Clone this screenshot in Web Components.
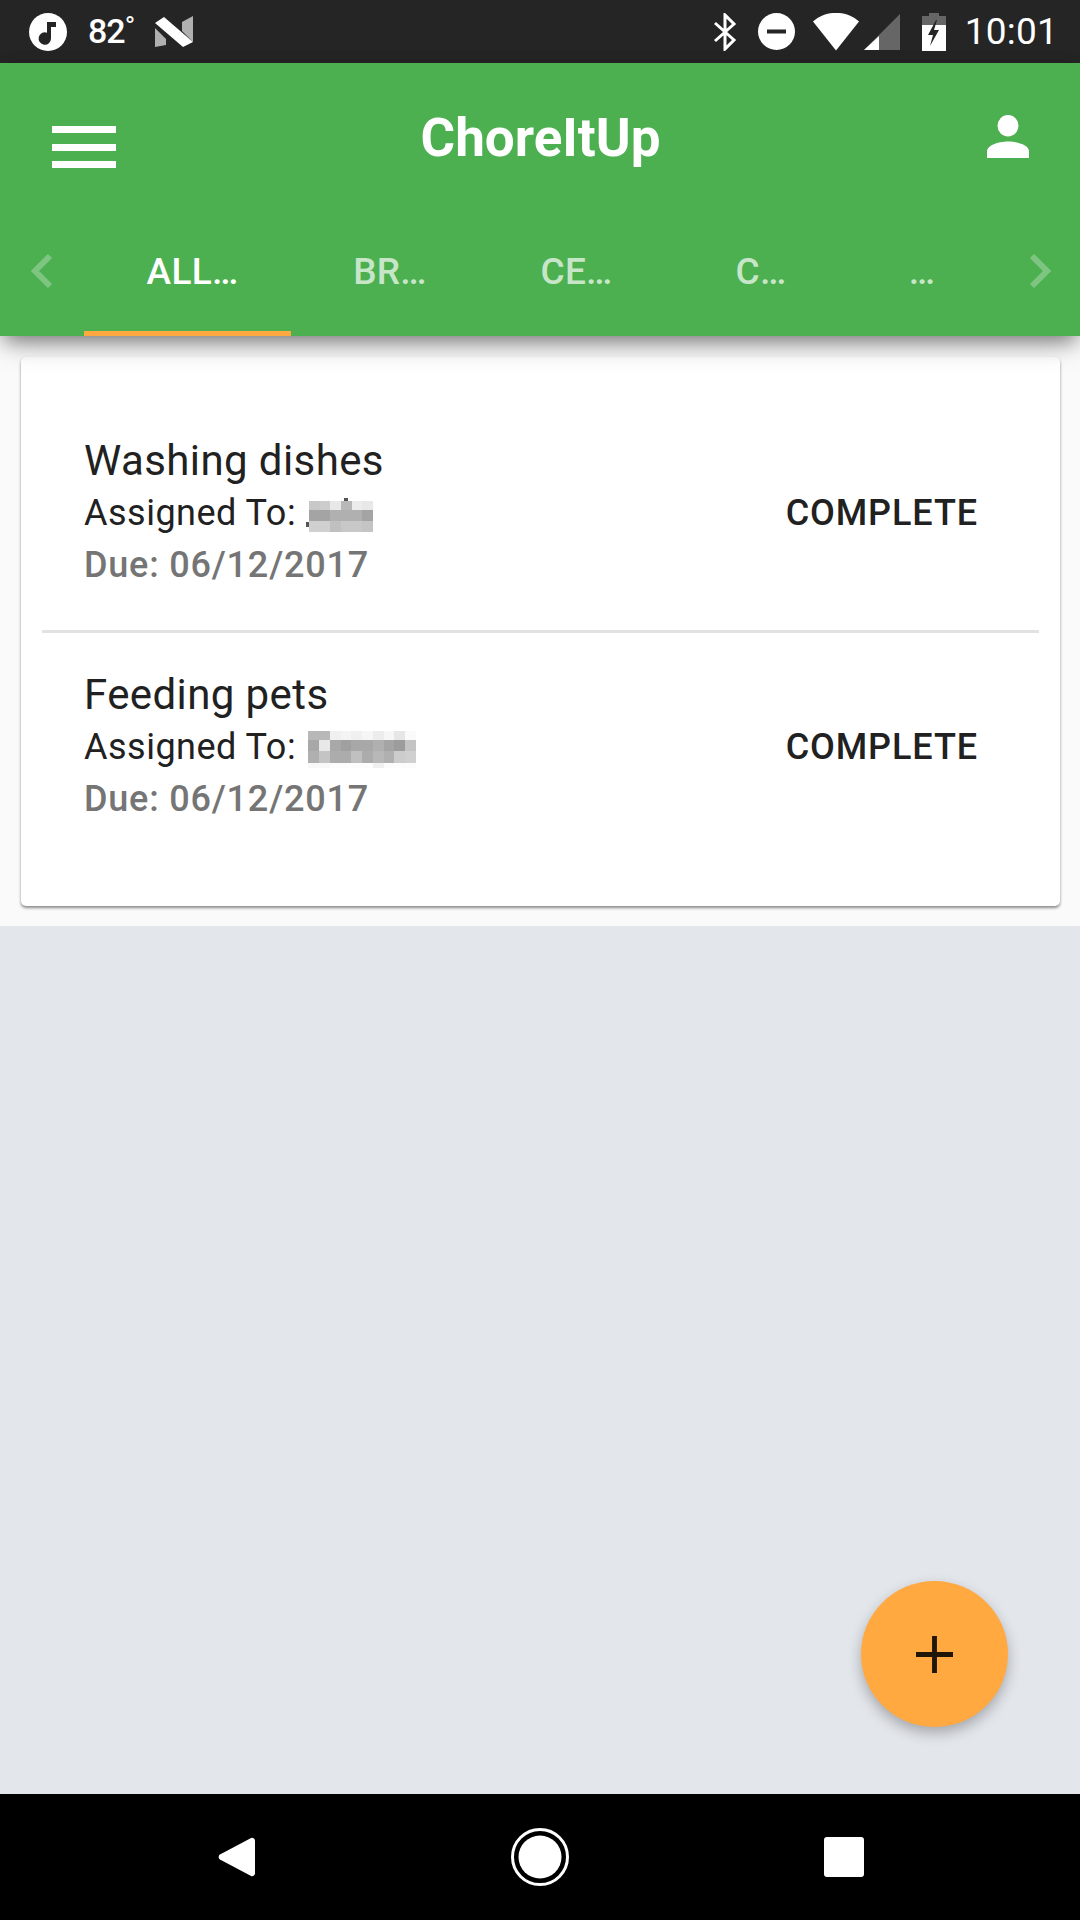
<!DOCTYPE html>
<html>
<head>
<meta charset="utf-8">
<title>ChoreItUp</title>
<style>
  html, body { margin: 0; padding: 0; }
  body { width: 1080px; height: 1920px; overflow: hidden; font-family: Roboto, "Liberation Sans", sans-serif; }
</style>
</head>
<body>
<app-shell>
  <status-bar></status-bar>
  <app-header title="ChoreItUp"></app-header>
  <chore-list>
    <chore-item name="Washing dishes" due="06/12/2017" cells="1"></chore-item>
    <chore-item name="Feeding pets" due="06/12/2017" cells="2"></chore-item>
  </chore-list>
  <add-button></add-button>
  <nav-bar></nav-bar>
</app-shell>

<script>
/* page frame */
class AppShell extends HTMLElement {
  constructor() {
    super();
    this.attachShadow({ mode: 'open' });
    this.shadowRoot.innerHTML = `
      <style>
        :host { display: flex; flex-direction: column; position: relative; width: 1080px; height: 1920px; background: #e3e6eb; }
      </style>
      <slot></slot>`;
  }
}

/* top android bar */
class StatusBar extends HTMLElement {
  constructor() {
    super();
    this.attachShadow({ mode: 'open' });
    this.shadowRoot.innerHTML = `
      <style>
        :host { display: flex; align-items: center; height: 63px; background: #252525; color: #fff; padding: 0 22px 0 29px; box-sizing: border-box; font-family: Roboto, sans-serif; flex: none; }
        svg { display: block; flex: none; }
        .temp { display: flex; font-size: 34px; font-weight: 500; margin-left: 21px; letter-spacing: -1px; line-height: 63px; }
        .temp small { font-size: 28px; font-weight: 400; line-height: 54px; letter-spacing: 0; }
        .n { margin-left: 20px; }
        .gap { flex: 1; }
        .time { font-size: 37px; margin-left: 19px; line-height: 63px; letter-spacing: .2px; }
      </style>
      <svg width="38" height="38" viewBox="0 0 38 38"><circle cx="19" cy="19" r="19" fill="#fff"/><path d="M18 9h9v5h-5v11.500a6.200 6.200 0 1 1-4-5.800z" fill="#252525"/></svg>
      <span class="temp">82<small>°</small></span>
      <svg class="n" width="38" height="31" viewBox="0 0 38 31"><path d="M0 12 11 23v6L0 31z" fill="#b0b0b0"/><path d="M27 6 38 0v26L27 15z" fill="#b0b0b0"/><path d="M0 7 9 1 38 26l-10 5z" fill="#fff"/></svg>
      <span class="gap"></span>
      <svg width="24" height="38" viewBox="0 0 24 38"><path d="M2 10l19 17-9 9V2l9 9L2 28" fill="none" stroke="#fff" stroke-width="3"/></svg>
      <svg style="margin-left:21px" width="37" height="37" viewBox="0 0 37 37"><circle cx="18.500" cy="18.500" r="18.500" fill="#fff"/><rect x="9" y="16.500" width="19" height="4" fill="#252525"/></svg>
      <svg style="margin-left:18px" width="87" height="38" viewBox="0 0 87 38"><path d="M0 8.500C13-3 33-3 46 8.500L23 37.500z" fill="#fff"/><path d="M51 37 87 1v36z" fill="#666"/><path d="M51 37 66 23v14z" fill="#fff"/></svg>
      <svg style="margin-left:22px" width="24" height="38" viewBox="0 0 24 38"><path d="M7 0h10v3h7v35H0V3h7z" fill="#666"/><path d="M0 12h24v26H0z" fill="#fff"/><path d="M14 7 6 22h5l-3 11 9-16h-5l3-10z" fill="#252525"/></svg>
      <span class="time">10:01</span>`;
  }
}

/* green bar: title row + tabs */
class AppHeader extends HTMLElement {
  constructor() {
    super();
    this.attachShadow({ mode: 'open' });
    this.shadowRoot.innerHTML = `
      <style>
        :host { display: block; position: relative; z-index: 2; flex: none; height: 273px; background: #4caf50; color: #fff; box-shadow: 0 8px 20px -4px rgba(0,0,0,.48), 0 12px 30px -4px rgba(0,0,0,.16); font-family: Roboto, sans-serif; }
        .top { display: grid; grid-template-columns: 1fr auto 1fr; align-items: center; height: 157px; box-sizing: border-box; padding: 0 51px 0 52px; }
        .menu { display: flex; flex-direction: column; gap: 10.500px; width: 64px; margin-top: 11px; }
        .menu i { display: block; height: 7px; background: #fff; }
        h1 { margin: 0; font-size: 53px; font-weight: 700; line-height: 60px; margin-top: -8px; }
        .user { justify-self: end; margin-top: -10px; display: block; }
        .tabs { display: flex; align-items: stretch; height: 116px; }
        .arrow { display: flex; align-items: center; justify-content: center; width: 84px; padding-bottom: 14px; box-sizing: border-box; }
        .arrow svg { display: block; }
        .fill { flex: 1; justify-content: flex-end; padding-right: 29px; }
      </style>
      <div class="top">
        <div class="menu"><i></i><i></i><i></i></div>
        <h1>${this.getAttribute('title')}</h1>
        <svg class="user" width="42" height="43" viewBox="0 0 44 44" preserveAspectRatio="none"><circle cx="22" cy="11" r="11" fill="#fff"/><path d="M0 44v-7c0-6 12-10 22-10s22 4 22 10v7z" fill="#fff"/></svg>
      </div>
      <div class="tabs">
        <div class="arrow"><svg width="22" height="34" viewBox="0 0 22 34"><path d="M19 2 4 17l15 15" fill="none" stroke="#fff" stroke-opacity=".28" stroke-width="6"/></svg></div>
        <tab-item w="207" active>ALL…</tab-item>
        <tab-item w="196">BR…</tab-item>
        <tab-item w="177">CE…</tab-item>
        <tab-item w="192">C…</tab-item>
        <tab-item w="130">…</tab-item>
        <div class="arrow fill"><svg width="22" height="34" viewBox="0 0 22 34"><path d="M3 2l15 15L3 32" fill="none" stroke="#fff" stroke-opacity=".28" stroke-width="6"/></svg></div>
      </div>`;
  }
}

class TabItem extends HTMLElement {
  constructor() {
    super();
    this.attachShadow({ mode: 'open' });
    this.shadowRoot.innerHTML = `
      <style>
        :host { display: flex; align-items: center; justify-content: center; box-sizing: border-box; width: ${this.getAttribute('w')}px; padding: 0 0 14px 2px; font-size: 37px; font-weight: 500; letter-spacing: .3px; color: rgba(255,255,255,.7); }
        :host([active]) { color: #fff; border-bottom: 5px solid #ffa940; padding: 0 0 9px 10px; }
      </style>
      <slot></slot>`;
  }
}

/* light band with the card */
class ChoreList extends HTMLElement {
  constructor() {
    super();
    this.attachShadow({ mode: 'open' });
    this.shadowRoot.innerHTML = `
      <style>
        :host { display: block; flex: none; background: #fafafa; padding: 21px 20px 20px 21px; }
        .card { background: #fff; border-radius: 5px; box-shadow: 0 2px 3px rgba(0,0,0,.45); padding: 42px 21px 0; height: 549px; box-sizing: border-box; }
        ::slotted(chore-item:not(:last-child)) { border-bottom: 3px solid #e2e2e2; }
      </style>
      <div class="card"><slot></slot></div>`;
  }
}

/* one row of the list */
class ChoreItem extends HTMLElement {
  constructor() {
    super();
    this.attachShadow({ mode: 'open' });
    this.shadowRoot.innerHTML = `
      <style>
        :host { display: flex; align-items: center; justify-content: space-between; padding: 36px 61px 39px 42px; color: #212121; font-family: Roboto, sans-serif; }
        .name { font-size: 42px; line-height: 52px; letter-spacing: .4px; }
        .who { display: flex; align-items: center; font-size: 36px; line-height: 52px; letter-spacing: .5px; }
        .due { font-size: 36px; line-height: 52px; font-weight: 500; color: #757575; letter-spacing: .8px; }
        .action { font-size: 36px; font-weight: 500; letter-spacing: .9px; }
      </style>
      <div>
        <div class="name">${this.getAttribute('name')}</div>
        <div class="who">Assigned To:<blur-name v="${this.getAttribute('cells')}"></blur-name></div>
        <div class="due">Due: ${this.getAttribute('due')}</div>
      </div>
      <div class="action">COMPLETE</div>`;
  }
}

/* pixelated name */
class BlurName extends HTMLElement {
  constructor() {
    super();
    const first = this.getAttribute('v') === '1';
    const rows = first
      ? ['c8c8c8,cccccc,e8e8e8,b8b8b8,ececec,e8e8e8', 'a4a4a4,a4a4a4,b0b0b0,b0b0b0,b0b0b0,a4a4a4', 'd0d0d0,d0d0d0,c0c0c0,c8c8c8,c8c8c8,c4c4c4']
      : ['b8b8b8,b8b8b8,f0f0f0,f4f4f4,f0f0f0,f6f6f6,ececec,f6f6f6,e6e6e6,fafafa',
         'a8a8a8,e8e8e8,a8a8a8,a0a0a0,a8a8a8,a8a8a8,b0b0b0,a4a4a4,9c9c9c,c4c4c4',
         'b0b0b0,c4c4c4,acacac,acacac,c0c0c0,acacac,b8b8b8,b0b0b0,cccccc,d0d0d0',
         'f8f8f8,f8f8f8,fcfcfc,fcfcfc,fcfcfc,fcfcfc,f0f0f0,fcfcfc,fcfcfc,fcfcfc'];
    const size = first ? 10.67 : 10.8;
    const cols = rows[0].split(',').length;
    const cells = rows.map(r => r.split(',').map(c => `<i style="background:#${c}"></i>`).join('')).join('');
    this.attachShadow({ mode: 'open' });
    this.shadowRoot.innerHTML = `
      <style>
        :host { display: block; position: relative; margin: ${first ? '6px 0 0 13px' : '5px 0 0 12px'}; }
        .grid { display: grid; grid-template-columns: repeat(${cols}, ${size}px); grid-template-rows: ${first ? '9px 11px 11px' : '9px 11px 12px 5px'}; }
        .mark { position: absolute; background: #555; }
      </style>
      <div class="grid">${cells}</div>
      ${first ? '<b class="mark" style="left:-3px;top:21px;width:3px;height:5px"></b><b class="mark" style="left:35px;top:-3px;width:4px;height:3px"></b>' : ''}`;
  }
}

/* floating action button */
class AddButton extends HTMLElement {
  constructor() {
    super();
    this.attachShadow({ mode: 'open' });
    this.shadowRoot.innerHTML = `
      <style>
        :host { position: absolute; left: 861px; top: 1581px; width: 147px; height: 146px; border-radius: 50%; background: #ffa940; box-shadow: 0 6px 14px rgba(0,0,0,.28); display: flex; align-items: center; justify-content: center; }
        svg { display: block; }
      </style>
      <svg width="37" height="37" viewBox="0 0 38 38"><path d="M16.500 0h5v16.500H38v5H21.500V38h-5V21.500H0v-5h16.500z" fill="#1f1607"/></svg>`;
  }
}

/* bottom android nav */
class NavBar extends HTMLElement {
  constructor() {
    super();
    this.attachShadow({ mode: 'open' });
    this.shadowRoot.innerHTML = `
      <style>
        :host { display: flex; align-items: center; justify-content: space-between; position: absolute; left: 0; right: 0; bottom: 0; height: 126px; background: #000; box-sizing: border-box; padding: 0 216px 0 218px; }
        svg { display: block; }
      </style>
      <svg width="37" height="42" viewBox="0 0 38 42"><path d="M34 1.500 2 18.500a3 3 0 0 0 0 5L34 40.500a3 3 0 0 0 4-2.500V4a3 3 0 0 0-4-2.500z" fill="#fff"/></svg>
      <svg width="58" height="58" viewBox="0 0 58 58"><circle cx="29" cy="29" r="27.500" fill="none" stroke="#fff" stroke-width="3"/><circle cx="29" cy="29" r="21.500" fill="#fff"/></svg>
      <svg width="40" height="40" viewBox="0 0 40 40"><rect width="40" height="40" rx="3" fill="#fff"/></svg>`;
  }
}

customElements.define('app-shell', AppShell);
customElements.define('status-bar', StatusBar);
customElements.define('app-header', AppHeader);
customElements.define('tab-item', TabItem);
customElements.define('chore-list', ChoreList);
customElements.define('chore-item', ChoreItem);
customElements.define('blur-name', BlurName);
customElements.define('add-button', AddButton);
customElements.define('nav-bar', NavBar);
</script>
</body>
</html>
